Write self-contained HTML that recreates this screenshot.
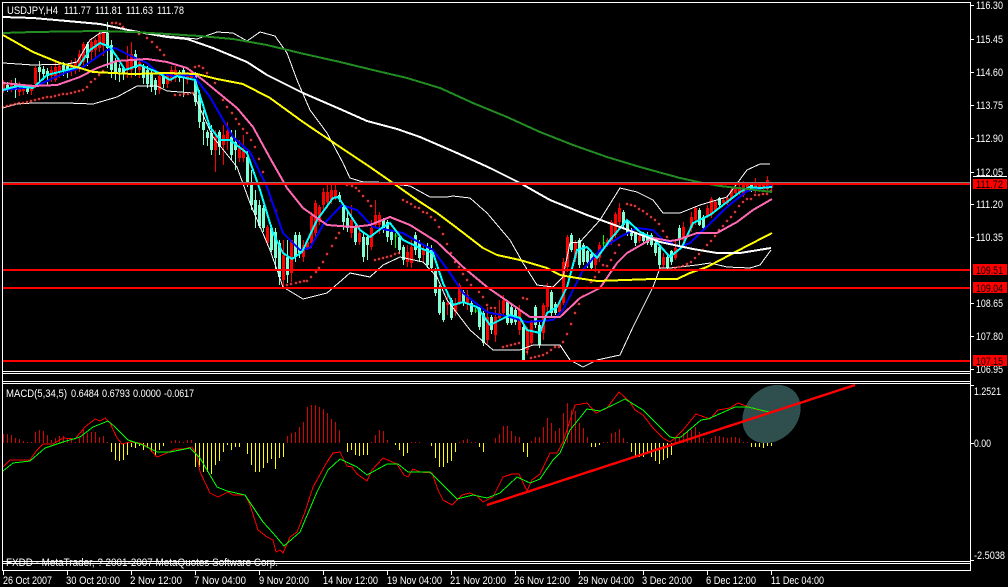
<!DOCTYPE html>
<html><head><meta charset="utf-8"><title>USDJPY,H4</title>
<style>
html,body{margin:0;padding:0;background:#000;width:1008px;height:587px;overflow:hidden}
svg{display:block}
text{font-family:"Liberation Sans",sans-serif;font-size:11px;fill:#fff}
.l{fill:none;shape-rendering:crispEdges}
</style></head><body>
<svg width="1008" height="587" viewBox="0 0 1008 587" xmlns="http://www.w3.org/2000/svg">
<defs>
<marker id="d" markerUnits="userSpaceOnUse" markerWidth="3" markerHeight="3" refX="1.5" refY="1.5" overflow="visible">
<path d="M0 1h3v1H0zM1 0h1v3H1z" fill="#f00" shape-rendering="crispEdges"/><path d="M1 1h1v1H1z" fill="#fff" shape-rendering="crispEdges"/>
</marker>
</defs>
<rect width="1008" height="587" fill="#000"/>

<!-- candles -->
<g transform="translate(.5,0)" class="l">
<path stroke="#f00" stroke-width="1" d="M3 80V93M11 80V92M19 82V96M23 84V95M31 84V95M35 66V88M51 66V82M55 62V82M59 62V78M71 60V76M75 58V74M79 50V72M83 42V68M91 38V60M95 38V58M99 32V52M103 30V56M127 46V78M131 42V78M139 58V78M159 72V94M167 72V88M171 66V82M175 66V82M187 72V84M191 70V80M215 130V172M223 125V165M227 122V150M239 140V162M243 135V162M267 225V246M283 240V288M291 240V282M303 240V262M307 238V250M311 212V248M315 200V238M319 205V225M323 188V212M327 185V208M331 184V204M335 184V200M351 205V238M359 225V245M371 220V250M375 200V228M379 212V234M407 245V267M411 240V268M423 245V262M447 295V315M455 298V316M459 283V305M467 290V310M487 307V345M495 310V342M499 300V320M503 295V316M519 305V335M527 327V355M531 320V345M543 303V340M547 283V312M559 300V315M563 258V305M567 235V272M575 240V262M595 253V272M599 242V262M607 238V247M611 220V245M615 212V238M619 203V225M639 235V243M663 253V268M675 240V260M683 222V243M691 212V232M695 206V225M707 205V218M711 197V218M715 200V212M723 198V205M727 195V205M731 188V200M735 185V195M739 185V195M743 181V197M747 183V192M755 178V193M759 182V192M763 182V190M767 176V192M771 182V190"/>
<path stroke="#f00" stroke-width="3" d="M3 84V90M11 84V88M19 86V92M23 88V91M31 87V91M35 68V84M51 70V76M55 67V80M59 66V72M71 65V70M75 62V70M79 54V66M83 44V62M91 42V52M95 40V50M99 34V48M103 33V46M127 60V70M131 54V70M139 62V70M159 76V90M167 74V84M171 70V78M175 70V78M187 74V80M191 72V78M215 137V150M223 135V145M227 131V140M239 148V158M243 150V158M267 227V243M283 255V280M291 240V273M303 245V257M307 242V248M311 216V243M315 203V233M319 207V222M323 192V205M327 192V202M331 190V200M335 190V198M351 220V233M359 233V242M371 228V247M375 215V225M379 215V225M407 252V262M411 247V263M423 250V255M447 303V305M455 303V312M459 285V303M467 295V303M487 317V340M495 317V335M499 313V318M503 300V313M519 310V330M527 330V350M531 322V343M543 305V333M547 287V307M559 302V312M563 262V303M567 237V267M575 242V258M595 255V265M599 245V258M607 240V245M611 222V243M615 214V235M619 208V222M639 236V241M663 257V265M675 248V258M683 227V240M691 217V228M695 208V220M707 208V216M711 199V215M715 202V210M723 200V203M727 198V203M731 190V198M735 187V193M739 187V193M743 183V195M747 185V191M755 183V190M759 183V190M763 183V189M767 180V189M771 183V188"/>
<path stroke="#7fffd4" stroke-width="1" d="M7 82V92M15 78V98M27 86V94M39 61V85M43 66V80M47 68V85M63 62V76M67 64V78M87 42V66M107 22V68M111 40V78M115 58V80M119 64V82M123 66V80M135 50V76M143 64V84M147 66V88M151 70V92M155 78V95M163 74V88M179 70V82M183 66V97M195 72V106M199 90V128M203 110V145M207 130V146M211 125V155M219 130V155M231 130V160M235 130V170M247 150V187M251 170V210M255 190V228M259 200V228M263 205V232M271 225V252M275 228V270M279 240V285M287 240V283M295 232V262M299 232V258M339 192V202M343 205V230M347 212V232M355 225V245M363 232V262M367 236V260M383 218V233M387 220V242M391 230V245M399 235V254M403 245V265M415 232V255M419 240V262M427 243V268M431 245V272M435 268V296M439 285V315M443 300V322M451 298V320M463 290V306M471 300V315M479 305V330M483 311V346M491 315V334M507 300V325M511 305V325M515 308V325M523 325V361M535 305V328M539 322V348M551 290V316M555 302V315M571 233V252M579 238V268M583 243V265M587 250V268M591 252V270M623 210V228M627 220V236M631 228V240M635 232V246M643 232V244M647 232V245M651 233V247M655 240V256M659 245V268M667 255V270M671 250V265M679 225V245M699 208V226M703 215V229M719 197V207M751 183V192"/>
<path stroke="#7fffd4" stroke-width="3" d="M7 85V89M15 83V90M27 88V92M39 67V72M43 69V74M47 71V76M63 65V70M67 66V72M87 44V58M107 33V48M111 45V70M115 62V72M119 68V72M123 68V74M135 54V68M143 66V78M147 70V84M151 74V87M155 80V90M163 76V84M179 72V78M183 70V76M195 76V102M199 95V122M203 122V130M207 132V138M211 133V150M219 132V147M231 137V155M235 142V150M247 157V183M251 185V205M255 200V215M259 205V226M263 208V228M271 228V250M275 232V258M279 243V277M287 257V275M295 235V257M299 235V253M339 195V199M343 207V222M347 218V228M355 227V242M363 237V257M367 237V245M383 220V228M387 222V237M391 232V240M399 237V250M403 247V260M415 235V250M419 243V258M427 247V265M431 250V268M435 270V293M439 287V313M443 302V320M451 300V318M463 292V303M471 303V312M479 307V327M483 313V343M491 317V330M507 302V323M511 307V323M515 310V322M523 327V360M535 307V325M539 325V345M551 292V313M555 304V313M571 235V250M579 240V265M583 245V262M587 251V262M591 254V268M623 212V225M627 222V233M631 230V236M635 233V243M643 233V241M647 235V243M651 235V245M655 243V253M659 247V265M667 257V268M671 251V262M679 228V240M699 210V225M703 217V228M719 198V205M751 185V190"/>
<path stroke="#0f0" stroke-width="1" d="M395 233V248M394 236h3M475 308V313M474 311h3M603 235V250M602 243h3"/>
</g>

<!-- bollinger bands -->
<polyline class="l" stroke="#fff" stroke-width="1" points="3,63 33,65 67,64 77,62 90,40 100,33 117,31 133,32 167,36 197,39 217,32 233,33 247,41 260,32 275,36 287,53 297,80 310,110 327,133 343,163 350,178 363,182 377,182 410,186 430,197 447,197 453,196 470,198 487,213 510,240 523,263 537,285 553,287 563,277 570,243 580,242 600,220 620,188 637,192 653,200 663,213 680,213 700,205 727,197 747,170 760,164 770,164"/>
<polyline class="l" stroke="#fff" stroke-width="1" points="3,108 17,104 33,103 67,103 93,104 117,97 137,86 157,86 167,91 193,93 213,137 237,167 250,203 270,250 283,287 303,299 327,293 350,273 370,277 383,265 400,257 423,262 437,277 447,300 470,330 493,350 520,350 533,345 560,345 570,360 583,367 597,360 620,355 633,327 653,287 660,268 670,268 697,265 710,263 727,267 750,268 760,265 771,250"/>

<!-- SAR -->
<polyline fill="none" stroke="none" marker-start="url(#d)" marker-mid="url(#d)" marker-end="url(#d)" points="3,107 7,106 11,105 15,104 19,103 23,103 27,102 31,101 35,100 39,99 43,98 47,97 51,97 55,96 59,95 63,94 67,94 71,93 75,92 79,91 83,90 87,87 91,82 95,79 99,75 103,71 112,23 116,23 120,24 123,27 132,31 139,34 147,38 152,42 157,47 160,50 164,55 175,95 180,95 184,94 188,94 193,93 195,67 199,66 203,68 207,73 215,83 223,100 227,107 232,113 236,119 239,124 243,129 247,133 251,140 255,147 259,159 263,172 271,200 276,211 287,285 291,284 296,283 300,282 304,281 307,281 311,277 316,272 319,268 323,262 327,254 332,246 336,238 339,233 347,185 352,186 356,188 359,191 363,196 368,201 371,206 375,260 379,259 383,258 387,257 391,256 395,254 399,253 403,200 407,202 411,204 415,207 419,208 423,212 427,213 431,217 435,220 439,227 443,234 447,244 451,253 455,262 459,267 463,274 467,280 471,285 479,292 483,297 487,305 491,308 495,308 503,347 507,346 511,345 515,344 519,343 523,298 527,299 527,352 531,358 535,357 539,356 543,355 547,353 551,350 555,347 559,347 563,342 567,334 571,324 575,313 579,304 583,296 587,288 591,282 595,277 599,272 603,265 607,266 611,260 615,253 619,245 627,204 631,205 635,206 639,209 643,211 647,214 651,217 655,220 659,224 663,231 667,237 675,268 679,267 683,266 687,264 691,262 695,258 699,254 703,250 707,245 711,241 715,236 719,230 723,226 727,221 731,217 735,212 739,206 743,202 747,199 751,199 755,195 759,195 763,194 767,194 771,191"/>

<!-- moving averages -->
<polyline class="l" stroke="#00f" stroke-width="2" points="3,90 33,87 47,81 67,72 83,67 107,50 115,48 133,57 147,63 157,72 173,76 193,75 210,97 233,137 250,152 267,187 283,233 300,250 310,248 323,225 342,205 357,210 373,227 403,233 420,243 433,250 450,273 463,293 487,312 510,317 527,322 553,320 563,310 583,270 600,250 620,237 637,228 653,230 663,240 680,247 690,243 727,207 747,191 772,186"/>
<polyline class="l" stroke="#0ff" stroke-width="2" points="3,90 17,86 33,88 47,75 67,70 78,67 90,50 100,43 110,47 117,57 125,70 140,65 157,72 170,80 177,76 195,80 210,127 220,140 230,140 247,153 260,190 273,233 283,253 292,259 302,252 317,220 333,198 338,197 347,210 360,230 370,237 383,227 390,223 403,240 420,248 433,253 443,283 453,305 463,302 477,307 490,325 500,320 510,315 520,318 527,330 540,333 547,313 557,307 567,287 577,250 587,247 597,258 610,240 627,220 640,232 653,238 670,257 682,247 693,223 710,215 727,202 740,192 750,187 760,188 772,187"/>
<polyline class="l" stroke="#ff69b4" stroke-width="2" points="3,83 33,86 57,85 80,77 97,68 117,61 147,59 167,62 187,68 203,80 237,108 253,127 270,158 287,188 303,208 327,225 353,227 370,225 390,217 410,225 437,242 463,267 487,287 510,303 530,317 560,317 580,298 600,288 617,263 627,253 653,238 670,241 677,240 697,233 717,233 737,222 753,210 772,199"/>
<polyline class="l" stroke="#ff0" stroke-width="2" points="3,35 33,52 60,63 80,68 93,72 133,74 167,73 197,74 217,79 243,84 270,98 303,122 340,147 370,167 393,183 417,200 437,213 453,225 470,238 483,248 497,255 520,260 547,268 560,275 577,278 597,281 653,279 677,279 690,273 707,267 743,248 772,233"/>
<polyline class="l" stroke="#fff" stroke-width="2" points="3,17 33,18 67,21 100,24 133,31 167,37 187,39 213,48 247,62 267,75 303,93 340,109 367,121 397,129 420,137 457,153 490,168 520,183 550,200 587,215 620,227 660,242 693,249 717,253 740,253 771,248"/>
<polyline class="l" stroke="#228b22" stroke-width="2" points="3,33 33,32 100,31 133,32 167,34 200,36 233,39 267,45 300,53 340,62 373,70 407,78 440,88 473,103 507,117 540,132 573,145 607,157 640,167 680,178 703,183 720,186 747,189 772,192"/>

<!-- horizontal levels -->
<rect x="3" y="182" width="967" height="1" fill="#808080"/>
<rect x="3" y="183" width="967" height="2" fill="#f00"/>
<rect x="3" y="269" width="967" height="2" fill="#f00"/>
<rect x="3" y="287" width="967" height="2" fill="#f00"/>
<rect x="3" y="360" width="967" height="2" fill="#f00"/>

<!-- MACD -->
<ellipse cx="771.5" cy="414" rx="32" ry="26" transform="rotate(-45 771.5 414)" fill="#2f4f4f" shape-rendering="crispEdges"/>
<g transform="translate(.5,0)" class="l" stroke-width="1">
<path stroke="#d80000" d="M3 443V434M7 443V434M11 443V435M15 443V438M19 443V439M23 443V441M27 443V442M31 443V442M35 443V432M39 443V430M43 443V431M47 443V435M51 443V440M55 443V438M59 443V436M63 443V436M67 443V438M71 443V438M75 443V442M79 443V438M83 443V430M87 443V433M91 443V432M95 443V432M99 443V437M103 443V436M107 443V442M171 443V441M175 443V440M179 443V441M183 443V442M187 443V440M191 443V440M287 443V436M291 443V433M295 443V432M299 443V427M303 443V422M307 443V407M311 443V405M315 443V405M319 443V407M323 443V409M327 443V413M331 443V419M335 443V422M339 443V430M371 443V442M375 443V435M379 443V430M383 443V431M387 443V440M411 443V442M415 443V442M419 443V442M459 443V442M463 443V440M467 443V439M471 443V442M475 443V442M495 443V438M499 443V434M503 443V426M507 443V426M511 443V431M515 443V436M519 443V437M531 443V441M535 443V437M539 443V437M543 443V427M547 443V418M551 443V423M555 443V431M559 443V428M563 443V413M567 443V403M571 443V410M575 443V411M579 443V423M583 443V428M587 443V437M603 443V442M607 443V442M611 443V433M615 443V432M619 443V429M623 443V438M627 443V442M675 443V438M679 443V437M683 443V433M687 443V432M691 443V430M695 443V427M699 443V432M703 443V438M707 443V442M711 443V438M715 443V436M719 443V436M723 443V437M727 443V438M731 443V437M735 443V437M739 443V438M743 443V442M747 443V442"/>
<path stroke="#ff0" d="M111 443V452M115 443V460M119 443V461M123 443V460M127 443V455M131 443V447M135 443V448M139 443V446M143 443V450M147 443V448M151 443V452M155 443V456M159 443V450M163 443V446M195 443V467M199 443V467M203 443V472M207 443V472M211 443V474M215 443V465M219 443V461M223 443V452M227 443V445M231 443V450M235 443V447M239 443V447M247 443V454M251 443V465M255 443V472M259 443V472M263 443V468M267 443V463M271 443V459M275 443V469M279 443V458M283 443V457M347 443V452M351 443V450M355 443V455M359 443V456M363 443V455M367 443V455M395 443V445M399 443V450M403 443V456M407 443V453M431 443V446M435 443V458M439 443V467M443 443V467M447 443V463M451 443V461M455 443V452M479 443V447M483 443V452M523 443V452M527 443V457M591 443V447M595 443V447M599 443V445M631 443V452M635 443V457M639 443V457M643 443V457M647 443V454M651 443V457M655 443V461M659 443V464M663 443V460M667 443V458M671 443V455M751 443V447M755 443V447M759 443V447M763 443V448M767 443V446M771 443V446"/>
</g>
<polyline class="l" stroke="#f00" stroke-width="1" points="3,467 10,460 30,460 37,450 43,444 53,444 63,438 75,439 85,427 95,419 100,421 105,418 110,423 117,438 122,444 130,442 140,443 148,447 157,457 167,453 175,449 183,449 192,447 197,455 200,472 210,493 218,497 228,492 233,495 245,495 250,505 258,530 267,537 273,540 276,552 280,550 283,553 290,537 297,532 305,512 313,487 327,462 333,453 340,452 347,466 352,467 357,474 367,481 372,470 383,458 397,464 404,475 408,477 413,469 420,472 432,473 438,490 443,500 452,505 462,495 470,493 477,496 483,502 493,497 503,477 512,474 519,474 527,491 532,480 540,474 550,453 557,453 563,442 575,405 587,403 596,413 607,408 619,392 630,402 635,410 643,415 653,428 663,438 670,442 675,438 683,430 696,414 710,419 718,410 730,408 738,403 746,406 758,410 769,412"/>
<polyline class="l" stroke="#0f0" stroke-width="1" points="3,471 13,463 30,461 45,448 63,442 80,437 93,427 108,421 115,427 128,440 143,445 157,452 170,452 190,448 200,458 217,487 227,491 245,495 263,522 273,533 284,546 300,532 317,492 328,470 340,459 357,467 367,475 387,464 398,464 408,472 430,472 457,499 473,495 487,498 500,493 517,477 530,483 540,479 553,460 560,453 570,430 587,409 600,411 613,405 625,399 643,410 670,437 675,438 681,437 701,420 708,419 735,407 748,407 769,412"/>
<line x1="487" y1="505" x2="855" y2="385" stroke="#f00" stroke-width="2.4" shape-rendering="crispEdges"/>

<!-- footer text (under frame lines) -->
<text x="6" y="566" textLength="272" lengthAdjust="spacingAndGlyphs">FXDD - MetaTrader, ? 2001-2007 MetaQuotes Software Corp.</text>

<!-- frame -->
<g fill="#fff" shape-rendering="crispEdges">
<rect x="2" y="2" width="969" height="1"/>
<rect x="2" y="2" width="1" height="569"/>
<rect x="970" y="2" width="1" height="569"/>
<rect x="2" y="371" width="969" height="1"/>
<rect x="2" y="373" width="969" height="1"/>
<rect x="2" y="381" width="969" height="1"/>
<rect x="2" y="383" width="969" height="1"/>
<rect x="2" y="561" width="969" height="1"/>
<rect x="2" y="563" width="969" height="1"/>
<rect x="2" y="570" width="969" height="1"/>
<path d="M971 5h3v1h-3zM971 39h3v1h-3zM971 72h3v1h-3zM971 105h3v1h-3zM971 138h3v1h-3zM971 172h3v1h-3zM971 204h3v1h-3zM971 237h3v1h-3zM971 303h3v1h-3zM971 336h3v1h-3zM971 369h3v1h-3zM971 385h3v1h-3zM971 443h3v1h-3zM971 560h3v1h-3z"/>
<path d="M3 571h1v4H3zM67 571h1v4h-1zM131 571h1v4h-1zM195 571h1v4h-1zM259 571h1v4h-1zM323 571h1v4h-1zM387 571h1v4h-1zM451 571h1v4h-1zM515 571h1v4h-1zM579 571h1v4h-1zM643 571h1v4h-1zM707 571h1v4h-1zM771 571h1v4h-1z"/>
</g>

<!-- titles -->
<g lengthAdjust="spacingAndGlyphs">
<text x="7" y="14" textLength="51" lengthAdjust="spacingAndGlyphs">USDJPY,H4</text>
<text x="64" y="14" textLength="27" lengthAdjust="spacingAndGlyphs">111.77</text>
<text x="95" y="14" textLength="27" lengthAdjust="spacingAndGlyphs">111.81</text>
<text x="126" y="14" textLength="27" lengthAdjust="spacingAndGlyphs">111.63</text>
<text x="157" y="14" textLength="27" lengthAdjust="spacingAndGlyphs">111.78</text>
<text x="6" y="397" textLength="61" lengthAdjust="spacingAndGlyphs">MACD(5,34,5)</text>
<text x="71" y="397" textLength="28" lengthAdjust="spacingAndGlyphs">0.6484</text>
<text x="102" y="397" textLength="28" lengthAdjust="spacingAndGlyphs">0.6793</text>
<text x="133" y="397" textLength="28" lengthAdjust="spacingAndGlyphs">0.0000</text>
<text x="164" y="397" textLength="30" lengthAdjust="spacingAndGlyphs">-0.0617</text>
</g>

<!-- price axis -->
<text x="976" y="9" textLength="27" lengthAdjust="spacingAndGlyphs">116.30</text>
<text x="976" y="43" textLength="27" lengthAdjust="spacingAndGlyphs">115.45</text>
<text x="976" y="76" textLength="27" lengthAdjust="spacingAndGlyphs">114.60</text>
<text x="976" y="109" textLength="27" lengthAdjust="spacingAndGlyphs">113.75</text>
<text x="976" y="142" textLength="27" lengthAdjust="spacingAndGlyphs">112.90</text>
<text x="976" y="176" textLength="27" lengthAdjust="spacingAndGlyphs">112.05</text>
<text x="976" y="208" textLength="27" lengthAdjust="spacingAndGlyphs">111.20</text>
<text x="976" y="241" textLength="27" lengthAdjust="spacingAndGlyphs">110.35</text>
<text x="976" y="307" textLength="27" lengthAdjust="spacingAndGlyphs">108.65</text>
<text x="976" y="340" textLength="27" lengthAdjust="spacingAndGlyphs">107.80</text>
<text x="976" y="373" textLength="27" lengthAdjust="spacingAndGlyphs">106.95</text>

<rect x="973" y="176" width="34" height="1" fill="#fff"/>
<rect x="973" y="179" width="34" height="10" fill="#f00"/>
<rect x="973" y="264" width="34" height="11" fill="#f00"/>
<rect x="973" y="282" width="34" height="11" fill="#f00"/>
<rect x="973" y="355" width="34" height="11" fill="#f00"/>
<text x="976" y="188" textLength="27" lengthAdjust="spacingAndGlyphs" style="fill:#000">111.72</text>
<text x="976" y="274" textLength="27" lengthAdjust="spacingAndGlyphs" style="fill:#000">109.51</text>
<text x="976" y="292" textLength="27" lengthAdjust="spacingAndGlyphs" style="fill:#000">109.04</text>
<text x="976" y="365" textLength="27" lengthAdjust="spacingAndGlyphs" style="fill:#000">107.15</text>

<!-- MACD axis -->
<text x="974" y="395" textLength="27" lengthAdjust="spacingAndGlyphs">1.2521</text>
<text x="974" y="447" textLength="17" lengthAdjust="spacingAndGlyphs">0.00</text>
<text x="974" y="559" textLength="31" lengthAdjust="spacingAndGlyphs">-2.5038</text>

<!-- time axis -->
<text x="3" y="584" textLength="49" lengthAdjust="spacingAndGlyphs">26 Oct 2007</text>
<text x="66" y="584" textLength="54" lengthAdjust="spacingAndGlyphs">30 Oct 20:00</text>
<text x="130" y="584" textLength="52" lengthAdjust="spacingAndGlyphs">2 Nov 12:00</text>
<text x="194" y="584" textLength="52" lengthAdjust="spacingAndGlyphs">7 Nov 04:00</text>
<text x="259" y="584" textLength="50" lengthAdjust="spacingAndGlyphs">9 Nov 20:00</text>
<text x="323" y="584" textLength="55" lengthAdjust="spacingAndGlyphs">14 Nov 12:00</text>
<text x="387" y="584" textLength="55" lengthAdjust="spacingAndGlyphs">19 Nov 04:00</text>
<text x="450" y="584" textLength="56" lengthAdjust="spacingAndGlyphs">21 Nov 20:00</text>
<text x="514" y="584" textLength="56" lengthAdjust="spacingAndGlyphs">26 Nov 12:00</text>
<text x="578" y="584" textLength="56" lengthAdjust="spacingAndGlyphs">29 Nov 04:00</text>
<text x="642" y="584" textLength="50" lengthAdjust="spacingAndGlyphs">3 Dec 20:00</text>
<text x="706" y="584" textLength="50" lengthAdjust="spacingAndGlyphs">6 Dec 12:00</text>
<text x="771" y="584" textLength="53" lengthAdjust="spacingAndGlyphs">11 Dec 04:00</text>
</svg>
</body></html>
